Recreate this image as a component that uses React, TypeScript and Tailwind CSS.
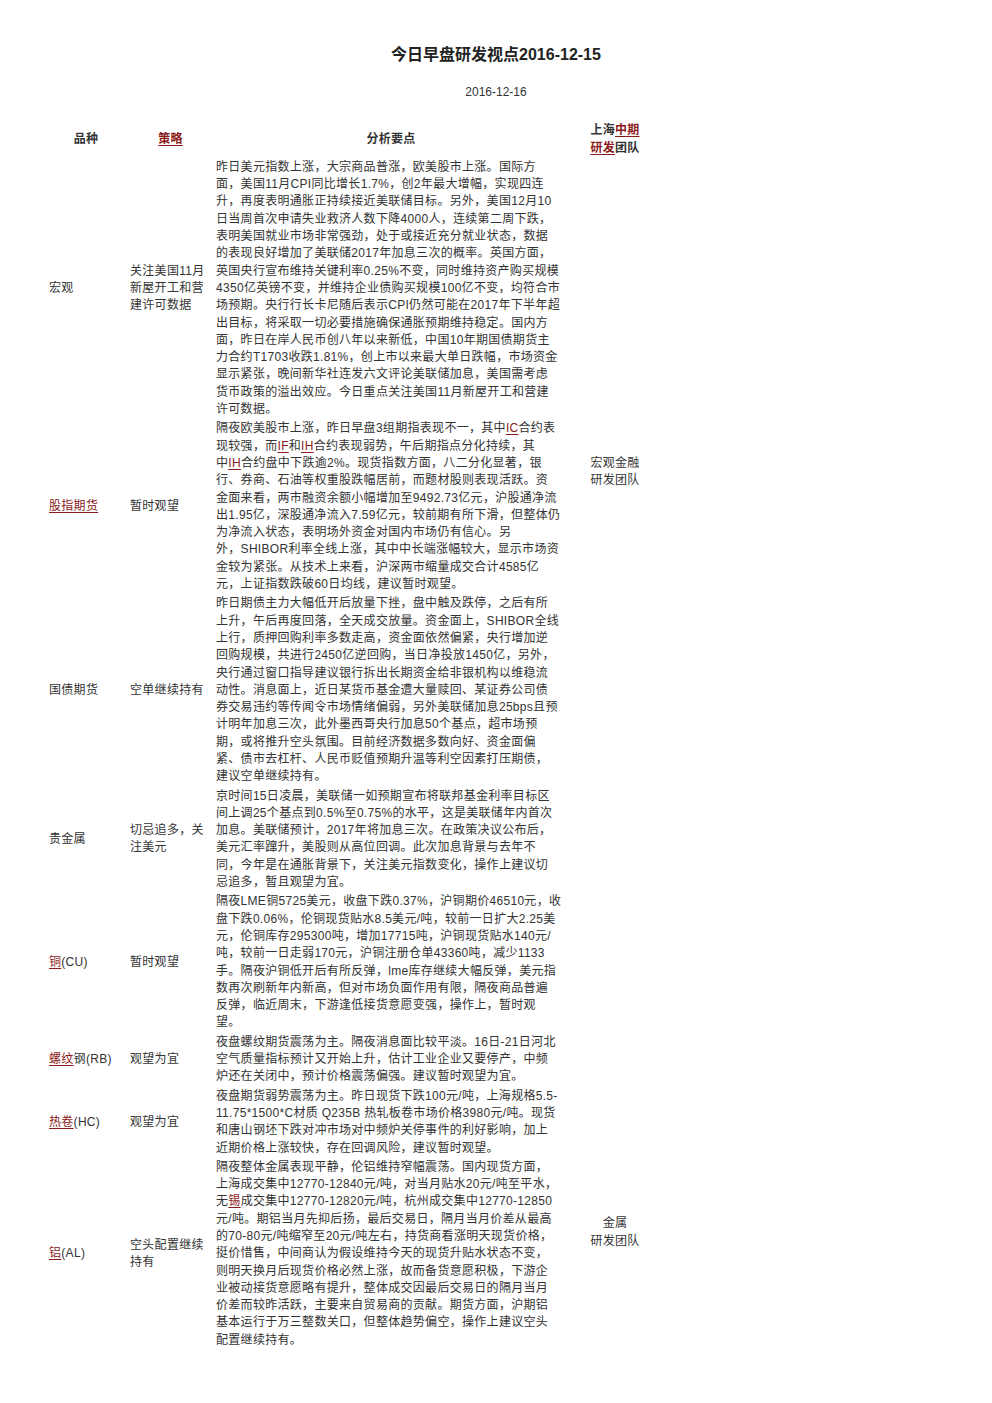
import React from "react";

const L = ({ children }: { children: React.ReactNode }) => (
  <span className="text-[#8b1a1a] underline underline-offset-2">{children}</span>
);

type Row = {
  name: React.ReactNode;
  strategy: string[];
  lines: React.ReactNode[];
  team?: { span: number; lines: string[]; align: "middle" | "bottom" };
};

const rows: Row[] = [
  {
    name: "宏观",
    strategy: ["关注美国11月", "新屋开工和营", "建许可数据"],
    team: { span: 3, lines: ["宏观金融", "研发团队"], align: "middle" },
    lines: [
      "昨日美元指数上涨，大宗商品普涨，欧美股市上涨。国际方",
      "面，美国11月CPI同比增长1.7%，创2年最大增幅，实现四连",
      "升，再度表明通胀正持续接近美联储目标。另外，美国12月10",
      "日当周首次申请失业救济人数下降4000人，连续第二周下跌，",
      "表明美国就业市场非常强劲，处于或接近充分就业状态，数据",
      "的表现良好增加了美联储2017年加息三次的概率。英国方面，",
      "英国央行宣布维持关键利率0.25%不变，同时维持资产购买规模",
      "4350亿英镑不变，并维持企业债购买规模100亿不变，均符合市",
      "场预期。央行行长卡尼随后表示CPI仍然可能在2017年下半年超",
      "出目标，将采取一切必要措施确保通胀预期维持稳定。国内方",
      "面，昨日在岸人民币创八年以来新低，中国10年期国债期货主",
      "力合约T1703收跌1.81%，创上市以来最大单日跌幅，市场资金",
      "显示紧张，晚间新华社连发六文评论美联储加息，美国需考虑",
      "货币政策的溢出效应。今日重点关注美国11月新屋开工和营建",
      "许可数据。",
    ],
  },
  {
    name: <L>股指期货</L>,
    strategy: ["暂时观望"],
    lines: [
      <>隔夜欧美股市上涨，昨日早盘3组期指表现不一，其中<L>IC</L>合约表</>,
      <>现较强，而<L>IF</L>和<L>IH</L>合约表现弱势，午后期指点分化持续，其</>,
      <>中<L>IH</L>合约盘中下跌逾2%。现货指数方面，八二分化显著，银</>,
      "行、券商、石油等权重股跌幅居前，而题材股则表现活跃。资",
      "金面来看，两市融资余额小幅增加至9492.73亿元，沪股通净流",
      "出1.95亿，深股通净流入7.59亿元，较前期有所下滑，但整体仍",
      "为净流入状态，表明场外资金对国内市场仍有信心。另",
      "外，SHIBOR利率全线上涨，其中中长端涨幅较大，显示市场资",
      "金较为紧张。从技术上来看，沪深两市缩量成交合计4585亿",
      "元，上证指数跌破60日均线，建议暂时观望。",
    ],
  },
  {
    name: "国债期货",
    strategy: ["空单继续持有"],
    lines: [
      "昨日期债主力大幅低开后放量下挫，盘中触及跌停，之后有所",
      "上升，午后再度回落，全天成交放量。资金面上，SHIBOR全线",
      "上行，质押回购利率多数走高，资金面依然偏紧，央行增加逆",
      "回购规模，共进行2450亿逆回购，当日净投放1450亿，另外，",
      "央行通过窗口指导建议银行拆出长期资金给非银机构以维稳流",
      "动性。消息面上，近日某货币基金遭大量赎回、某证券公司债",
      "券交易违约等传闻令市场情绪偏弱，另外美联储加息25bps且预",
      "计明年加息三次，此外墨西哥央行加息50个基点，超市场预",
      "期，或将推升空头氛围。目前经济数据多数向好、资金面偏",
      "紧、债市去杠杆、人民币贬值预期升温等利空因素打压期债，",
      "建议空单继续持有。",
    ],
  },
  {
    name: "贵金属",
    strategy: ["切忌追多，关", "注美元"],
    team: { span: 5, lines: ["金属", "研发团队"], align: "bottom" },
    lines: [
      "京时间15日凌晨，美联储一如预期宣布将联邦基金利率目标区",
      "间上调25个基点到0.5%至0.75%的水平，这是美联储年内首次",
      "加息。美联储预计，2017年将加息三次。在政策决议公布后，",
      "美元汇率蹿升，美股则从高位回调。此次加息背景与去年不",
      "同，今年是在通胀背景下，关注美元指数变化，操作上建议切",
      "忌追多，暂且观望为宜。",
    ],
  },
  {
    name: (
      <>
        <L>铜</L>(CU)
      </>
    ),
    strategy: ["暂时观望"],
    lines: [
      "隔夜LME铜5725美元，收盘下跌0.37%，沪铜期价46510元，收",
      "盘下跌0.06%，伦铜现货贴水8.5美元/吨，较前一日扩大2.25美",
      "元，伦铜库存295300吨，增加17715吨，沪铜现货贴水140元/",
      "吨，较前一日走弱170元，沪铜注册仓单43360吨，减少1133",
      "手。隔夜沪铜低开后有所反弹，lme库存继续大幅反弹，美元指",
      "数再次刷新年内新高，但对市场负面作用有限，隔夜商品普遍",
      "反弹，临近周末，下游逢低接货意愿变强，操作上，暂时观",
      "望。",
    ],
  },
  {
    name: (
      <>
        <L>螺纹</L>钢(RB)
      </>
    ),
    strategy: ["观望为宜"],
    lines: [
      "夜盘螺纹期货震荡为主。隔夜消息面比较平淡。16日-21日河北",
      "空气质量指标预计又开始上升，估计工业企业又要停产，中频",
      "炉还在关闭中，预计价格震荡偏强。建议暂时观望为宜。",
    ],
  },
  {
    name: (
      <>
        <L>热卷</L>(HC)
      </>
    ),
    strategy: ["观望为宜"],
    lines: [
      "夜盘期货弱势震荡为主。昨日现货下跌100元/吨，上海规格5.5-",
      "11.75*1500*C材质 Q235B 热轧板卷市场价格3980元/吨。现货",
      "和唐山钢坯下跌对冲市场对中频炉关停事件的利好影响，加上",
      "近期价格上涨较快，存在回调风险，建议暂时观望。",
    ],
  },
  {
    name: (
      <>
        <L>铝</L>(AL)
      </>
    ),
    strategy: ["空头配置继续", "持有"],
    lines: [
      "隔夜整体金属表现平静，伦铝维持窄幅震荡。国内现货方面，",
      "上海成交集中12770-12840元/吨，对当月贴水20元/吨至平水，",
      <>无<L>锡</L>成交集中12770-12820元/吨，杭州成交集中12770-12850</>,
      "元/吨。期铝当月先抑后扬，最后交易日，隔月当月价差从最高",
      "的70-80元/吨缩窄至20元/吨左右，持货商看涨明天现货价格，",
      "挺价惜售，中间商认为假设维持今天的现货升贴水状态不变，",
      "则明天换月后现货价格必然上涨，故而备货意愿积极，下游企",
      "业被动接货意愿略有提升，整体成交因最后交易日的隔月当月",
      "价差而较昨活跃，主要来自贸易商的贡献。期货方面，沪期铝",
      "基本运行于万三整数关口，但整体趋势偏空，操作上建议空头",
      "配置继续持有。",
    ],
  },
];

export default function App() {
  return (
    <div className="w-[992px] min-h-[1403px] bg-white text-[#333] font-['Liberation_Sans','Noto_Sans_CJK_SC',sans-serif] text-[12px] leading-[17.3px] tracking-[0.3px]">
      <div className="pt-[45px] text-center text-[16px] leading-[20px] font-bold text-[#222] tracking-normal">
        今日早盘研发视点2016-12-15
      </div>
      <div className="mt-[19px] text-center tracking-normal">2016-12-16</div>
      <table className="mt-[20px] ml-[45px] table-fixed border-collapse w-[617px]">
        <colgroup>
          <col className="w-[82px]" />
          <col className="w-[87px]" />
          <col className="w-[354px]" />
          <col className="w-[94px]" />
        </colgroup>
        <thead>
          <tr className="font-bold">
            <th className="py-px text-center align-middle font-bold">品种</th>
            <th className="py-px text-center align-middle font-bold">
              <L>策略</L>
            </th>
            <th className="py-px text-center align-middle font-bold">分析要点</th>
            <th className="py-px text-center align-middle font-bold">
              <div>
                上海<L>中期</L>
              </div>
              <div>
                <L>研发</L>团队
              </div>
            </th>
          </tr>
        </thead>
        <tbody>
          {rows.map((r, i) => (
            <tr key={i}>
              <td className="py-px pl-1 align-middle whitespace-nowrap">{r.name}</td>
              <td className="py-px pl-[3px] align-middle">
                {r.strategy.map((s, j) => (
                  <div key={j} className="whitespace-nowrap">
                    {s}
                  </div>
                ))}
              </td>
              <td className="py-px pl-[2px] align-top">
                {r.lines.map((l, j) => (
                  <div key={j} className="whitespace-nowrap">
                    {l}
                  </div>
                ))}
              </td>
              {r.team && (
                <td
                  rowSpan={r.team.span}
                  className={
                    r.team.align === "middle"
                      ? "py-px text-center align-middle"
                      : "pt-px pb-[100px] text-center align-bottom"
                  }
                >
                  {r.team.lines.map((t, j) => (
                    <div key={j}>{t}</div>
                  ))}
                </td>
              )}
            </tr>
          ))}
        </tbody>
      </table>
    </div>
  );
}
